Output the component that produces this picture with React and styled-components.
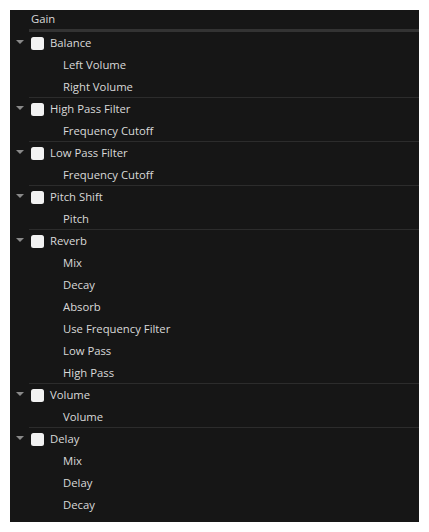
import React from 'react';
import styled, { createGlobalStyle } from 'styled-components';

const GlobalStyle = createGlobalStyle`
    html, body {
        margin: 0;
        padding: 0;
        background: #ffffff;
    }
    body {
        padding: 10px;
        font-family: "Open Sans", "Noto Sans", sans-serif;
    }
`;

const Panel = styled.div`
    width: 409px;
    height: 512px;
    background: #161616;
    color: #d9d9d9;
    font-size: 11.3px;
    box-sizing: border-box;
    overflow: hidden;
`;

const Header = styled.div`
    margin-left: 19px;
    padding-left: 2px;
    height: 19px;
    line-height: 17px;
    border-bottom: 3px solid #333333;
`;

const Row = styled.div`
    display: flex;
    align-items: center;
    height: 22px;
    line-height: 22px;
    padding-left: ${({ indent }) => indent || 0}px;
    white-space: nowrap;
`;

const Toggle = styled.span`
    width: 19px;
    display: flex;
    justify-content: center;
    margin-top: -3px;
    &::before {
        content: '';
        display: block;
        border-left: 4px solid transparent;
        border-right: 4px solid transparent;
        border-top: 4px solid #8a8a8a;
    }
`;

const Check = styled.span`
    width: 13px;
    height: 13px;
    margin-left: 2px;
    margin-right: 6px;
    border-radius: 2.5px;
    background: #f2f2f2;
    flex-shrink: 0;
`;

const Divider = styled.div`
    margin-left: 19px;
    margin-top: -1px;
    height: 1px;
    background: #2c2c2c;
`;

const groups = [
    { name: 'Balance', params: ['Left Volume', 'Right Volume'] },
    { name: 'High Pass Filter', params: ['Frequency Cutoff'] },
    { name: 'Low Pass Filter', params: ['Frequency Cutoff'] },
    { name: 'Pitch Shift', params: ['Pitch'] },
    { name: 'Reverb', params: ['Mix', 'Decay', 'Absorb', 'Use Frequency Filter', 'Low Pass', 'High Pass'] },
    { name: 'Volume', params: ['Volume'] },
    { name: 'Delay', params: ['Mix', 'Delay', 'Decay'], last: true }
];

const EffectGroup = ({ name, params, last }) => (
    <div>
        <Row>
            <Toggle />
            <Check />
            <span>{name}</span>
        </Row>
        {params.map((p, i) => (
            <Row key={i} indent={53}>{p}</Row>
        ))}
        {last ? null : <Divider />}
    </div>
);

export default function App() {
    return (
        <>
            <GlobalStyle />
            <Panel>
                <Header>Gain</Header>
                {groups.map((g) => (
                    <EffectGroup key={g.name} {...g} />
                ))}
            </Panel>
        </>
    );
}
